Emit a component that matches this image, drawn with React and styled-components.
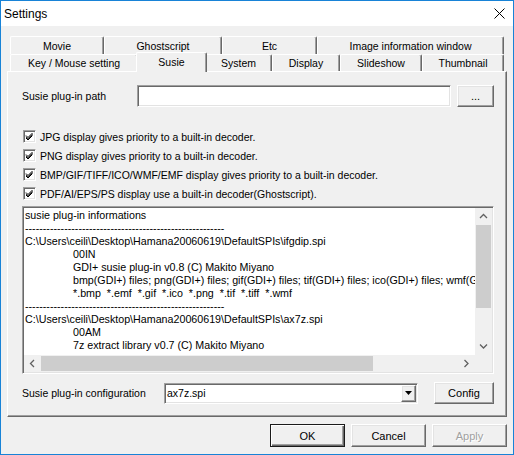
import React from 'react';
import styled, { createGlobalStyle, css } from 'styled-components';

const GlobalStyle = createGlobalStyle`
  html, body { margin: 0; padding: 0; background: #fff; }
  body { font-family: "Liberation Sans", Arial, sans-serif; font-size: 10.5px; color: #000; }
  * { box-sizing: border-box; }
`;

const raised = css`
  border-style: solid;
  border-width: 1px;
  border-color: #fff #696969 #696969 #fff;
  box-shadow: inset -1px -1px #a0a0a0, inset 1px 1px #e3e3e3;
`;

const sunken = css`
  border-style: solid;
  border-width: 1px;
  border-color: #a0a0a0 #fff #fff #a0a0a0;
  box-shadow: inset 1px 1px #696969, inset -1px -1px #e3e3e3;
`;

const Window = styled.div`
  width: 514px;
  height: 455px;
  border: 1px solid #1883d7;
  background: #f0f0f0;
  display: flex;
  flex-direction: column;
`;

const TitleBar = styled.div`
  height: 25px;
  flex: none;
  background: #fff;
  display: flex;
  align-items: center;
  justify-content: space-between;
  padding: 0 8px 0 3px;
  font-size: 12px;
`;

const Body = styled.div`
  flex: 1;
  display: flex;
  flex-direction: column;
  padding: 10px 6px 0 6px;
`;

const TabStrip = styled.div`
  display: flex;
  flex-direction: column;
  padding: 0 3px;
`;

const TabRow = styled.div`
  display: flex;
  align-items: flex-start;
  height: ${(p) => p.$h}px;
`;

const Tab = styled.div`
  flex: none;
  width: ${(p) => p.$w}px;
  height: 100%;
  background: #f0f0f0;
  border-top: 1px solid #fff;
  border-left: 1px solid #fff;
  border-right: 1px solid #696969;
  border-radius: 2px 2px 0 0;
  box-shadow: inset -1px 0 #a0a0a0;
  display: flex;
  align-items: center;
  justify-content: center;
  white-space: nowrap;
  ${(p) =>
    p.$active &&
    css`
      position: relative;
      z-index: 2;
      width: ${p.$w + 4}px;
      margin: -2px -2px 0;
      height: calc(100% + 3px);
      padding-bottom: 1px;
    `}
`;

const Panel = styled.div`
  height: 346px;
  flex: none;
  border-top: 1px solid #fff;
  border-left: 1px solid #fff;
  border-right: 1px solid #696969;
  border-bottom: 1px solid #696969;
  box-shadow: inset -1px -1px #a0a0a0;
  padding: 13px 12px 0 14px;
  display: flex;
  flex-direction: column;
`;

const Row = styled.div`
  display: flex;
  align-items: center;
  height: 22px;
  margin-top: ${(p) => p.$mt || 0}px;
`;

const Label = styled.div`
  width: ${(p) => p.$w}px;
  flex: none;
  white-space: nowrap;
`;

const TextInput = styled.div`
  ${sunken};
  width: ${(p) => p.$w}px;
  height: 22px;
  background: #fff;
`;

const Button = styled.div`
  ${raised};
  flex: none;
  width: ${(p) => p.$w}px;
  height: ${(p) => p.$h || 22}px;
  margin-left: ${(p) => p.$ml || 0}px;
  display: flex;
  align-items: center;
  justify-content: center;
  background: #f0f0f0;
  font-size: 11px;
  color: ${(p) => (p.$disabled ? '#a0a0a0' : '#000')};
  text-shadow: ${(p) => (p.$disabled ? '1px 1px #fff' : 'none')};
  ${(p) =>
    p.$default &&
    css`
      border: 1px solid #1a1a1a;
      box-shadow: inset 1px 1px #fff, inset -1px -1px #696969, inset -2px -2px #a0a0a0;
    `}
`;

const CheckList = styled.div`
  display: flex;
  flex-direction: column;
  margin-top: 20px;
`;

const CheckRow = styled.div`
  height: 19px;
  display: flex;
  align-items: center;
  gap: 4px;
  padding-left: 1px;
  white-space: nowrap;
`;

const CheckBox = styled.div`
  ${sunken};
  width: 13px;
  height: 13px;
  flex: none;
  background: #fff;
  display: flex;
  align-items: center;
  justify-content: center;
`;

const InfoBox = styled.div`
  ${sunken};
  margin-top: 3px;
  height: 168px;
  flex: none;
  background: #fff;
  padding: 1px;
  display: grid;
  grid-template-columns: 1fr 17px;
  grid-template-rows: 1fr 17px;
`;

const TextView = styled.div`
  overflow: hidden;
  padding: 1px 0 0 1px;
  font-size: 10.7px;
  line-height: 13px;
  white-space: pre;
`;

const Line = styled.div`
  height: 13px;
  padding-left: ${(p) => (p.$indent ? 48 : 0)}px;
`;

const VScroll = styled.div`
  background: #f0f0f0;
  display: flex;
  flex-direction: column;
`;

const HScroll = styled.div`
  background: #f0f0f0;
  display: flex;
`;

const Corner = styled.div`
  background: #f0f0f0;
`;

const Arrow = styled.div`
  width: 17px;
  height: 17px;
  flex: none;
  display: flex;
  align-items: center;
  justify-content: center;
`;

const Track = styled.div`
  flex: 1;
  display: flex;
  flex-direction: ${(p) => (p.$vertical ? 'column' : 'row')};
`;

const Thumb = styled.div`
  background: #cdcdcd;
  ${(p) =>
    p.$vertical
      ? css`
          height: ${p.$size}px;
          margin: 0 1px;
        `
      : css`
          width: ${p.$size}px;
          margin: 1px 0;
        `}
`;

const Combo = styled.div`
  ${sunken};
  width: ${(p) => p.$w}px;
  height: 21px;
  background: #fff;
  display: flex;
  align-items: center;
  padding: 1px;
`;

const ComboText = styled.div`
  flex: 1;
  padding-left: 1px;
`;

const DropButton = styled.div`
  ${raised};
  width: 15px;
  height: 17px;
  background: #f0f0f0;
  display: flex;
  align-items: center;
  justify-content: center;
`;

const ButtonRow = styled.div`
  display: flex;
  justify-content: flex-end;
  gap: 6px;
  margin-top: 7px;
`;

const Chevron = ({ dir }) => {
  const pts = {
    up: '1,5 4.5,1.5 8,5',
    down: '1,1.5 4.5,5 8,1.5',
    left: '5,1 1.5,4.5 5,8',
    right: '1.5,1 5,4.5 1.5,8',
  }[dir];
  const horiz = dir === 'left' || dir === 'right';
  return (
    <svg width={horiz ? 7 : 9} height={horiz ? 9 : 7} viewBox={horiz ? '0 0 7 9' : '0 0 9 7'}>
      <polyline points={pts} fill="none" stroke="#606060" strokeWidth="1.3" />
    </svg>
  );
};

const CheckMark = () => (
  <svg width="9" height="9" viewBox="0 0 9 9">
    <path d="M1 3.5 L3 5.5 L7.5 1 M1 4.8 L3 6.8 L7.5 2.3 M1 6 L3 8 L7.5 3.5" fill="none" stroke="#000" strokeWidth="1" />
  </svg>
);

const dashes = '-'.repeat(56);

const lines = [
  ['susie plug-in informations', false],
  [dashes, false],
  ['C:\\Users\\ceili\\Desktop\\Hamana20060619\\DefaultSPIs\\ifgdip.spi', false],
  ['00IN', true],
  ['GDI+ susie plug-in v0.8 (C) Makito Miyano', true],
  ['bmp(GDI+) files; png(GDI+) files; gif(GDI+) files; tif(GDI+) files; ico(GDI+) files; wmf(GDI+) files', true],
  ['*.bmp  *.emf  *.gif  *.ico  *.png  *.tif  *.tiff  *.wmf', true],
  [dashes, false],
  ['C:\\Users\\ceili\\Desktop\\Hamana20060619\\DefaultSPIs\\ax7z.spi', false],
  ['00AM', true],
  ['7z extract library v0.7 (C) Makito Miyano', true],
];

const checks = [
  'JPG display gives priority to a built-in decoder.',
  'PNG display gives priority to a built-in decoder.',
  'BMP/GIF/TIFF/ICO/WMF/EMF display gives priority to a built-in decoder.',
  'PDF/AI/EPS/PS display use a built-in decoder(Ghostscript).',
];

const row1 = [
  ['Movie', 94],
  ['Ghostscript', 118],
  ['Etc', 95],
  ['Image information window', 187],
];

const row2 = [
  ['Key / Mouse setting', 128],
  ['Susie', 67, true],
  ['System', 67],
  ['Display', 68],
  ['Slideshow', 82],
  ['Thumbnail', 82],
];

export default function App() {
  return (
    <>
      <GlobalStyle />
      <Window>
        <TitleBar>
          <span>Settings</span>
          <svg width="11" height="11" viewBox="0 0 11 11">
            <path d="M0.5 0.5 L10.5 10.5 M10.5 0.5 L0.5 10.5" stroke="#000" strokeWidth="1" />
          </svg>
        </TitleBar>
        <Body>
          <TabStrip>
            <TabRow $h={18}>
              {row1.map(([t, w]) => (
                <Tab key={t} $w={w}>{t}</Tab>
              ))}
            </TabRow>
            <TabRow $h={17}>
              {row2.map(([t, w, a]) => (
                <Tab key={t} $w={w} $active={a}>{t}</Tab>
              ))}
            </TabRow>
          </TabStrip>
          <Panel>
            <Row>
              <Label $w={115}>Susie plug-in path</Label>
              <TextInput $w={314} />
              <Button $w={37} $ml={6}>...</Button>
            </Row>
            <CheckList>
              {checks.map((c) => (
                <CheckRow key={c}>
                  <CheckBox>
                    <CheckMark />
                  </CheckBox>
                  <span>{c}</span>
                </CheckRow>
              ))}
            </CheckList>
            <InfoBox>
              <TextView>
                {lines.map(([t, ind], i) => (
                  <Line key={i} $indent={ind}>{t}</Line>
                ))}
              </TextView>
              <VScroll>
                <Arrow><Chevron dir="up" /></Arrow>
                <Track $vertical>
                  <Thumb $vertical $size={83} />
                </Track>
                <Arrow><Chevron dir="down" /></Arrow>
              </VScroll>
              <HScroll>
                <Arrow><Chevron dir="left" /></Arrow>
                <Track>
                  <Thumb $size={332} />
                </Track>
                <Arrow><Chevron dir="right" /></Arrow>
              </HScroll>
              <Corner />
            </InfoBox>
            <Row $mt={8}>
              <Label $w={142}>Susie plug-in configuration</Label>
              <Combo $w={254}>
                <ComboText>ax7z.spi</ComboText>
                <DropButton>
                  <svg width="7" height="4" viewBox="0 0 7 4">
                    <path d="M0 0 H7 L3.5 4 Z" fill="#000" />
                  </svg>
                </DropButton>
              </Combo>
              <Button $w={60} $ml={16}>Config</Button>
            </Row>
          </Panel>
          <ButtonRow>
            <Button $w={75} $h={23} $default>OK</Button>
            <Button $w={75} $h={23}>Cancel</Button>
            <Button $w={75} $h={23} $disabled>Apply</Button>
          </ButtonRow>
        </Body>
      </Window>
    </>
  );
}
